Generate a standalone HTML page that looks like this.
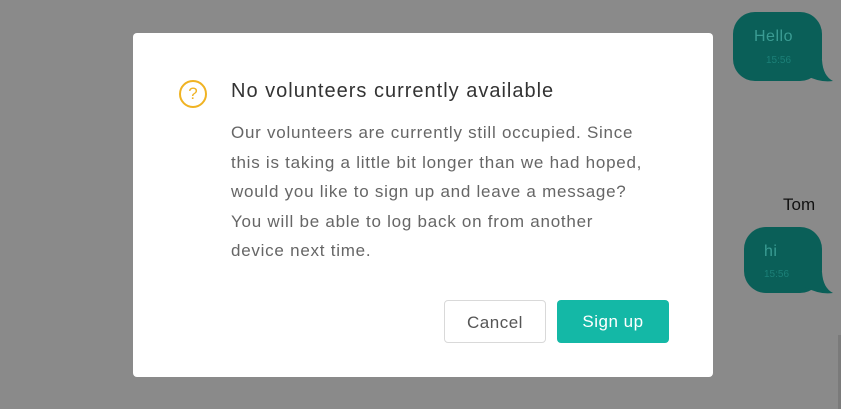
<!DOCTYPE html>
<html><head><style>
body{margin:0;width:841px;height:409px;background:#8a8a8a;position:relative;overflow:hidden;font-family:"Liberation Sans",sans-serif}
.b{position:absolute;background:#0a5f58;border-radius:22px}
.b .t{position:absolute;font-size:16px;color:#3a9c93;letter-spacing:0.5px}
.b .s{position:absolute;font-size:10px;color:#1c8078}
.m{position:absolute;left:133px;top:33px;width:580px;height:344px;background:#fff;border-radius:4px}
.ic{position:absolute;left:179px;top:80px;width:24px;height:24px;border:2px solid #f0b323;border-radius:50%;color:#f0b323;font-size:17px;text-align:center;line-height:24px}
h1{position:absolute;left:231px;top:80px;margin:0;font-weight:normal;font-size:20px;letter-spacing:1px;color:#333}
p{position:absolute;left:231px;top:118px;margin:0;width:420px;font-size:17px;letter-spacing:0.75px;line-height:29.6px;color:#666}
.btn{position:absolute;top:300px;height:43px;border-radius:4px;font-size:17px;letter-spacing:0.5px;text-align:center;line-height:43px;box-sizing:border-box}
</style></head><body>
<div class="b" style="left:733px;top:12px;width:89px;height:69px"><span class="t" style="left:21px;top:16px">Hello</span><span class="s" style="left:33px;top:43px">15:56</span></div>
<svg style="position:absolute;left:805px;top:60px" width="30" height="25"><path d="M0 0 L17 0 Q18 16 28 21 Q15 23 0 15Z" fill="#0a5f58"/></svg>
<div style="position:absolute;left:783px;top:195px;font-size:17px;color:#111">Tom</div>
<div class="b" style="left:744px;top:227px;width:78px;height:66px"><span class="t" style="left:20px;top:16px">hi</span><span class="s" style="left:20px;top:42px">15:56</span></div>
<svg style="position:absolute;left:805px;top:272px" width="30" height="25"><path d="M0 0 L17 0 Q18 16 28 21 Q15 23 0 15Z" fill="#0a5f58"/></svg>
<div style="position:absolute;left:838px;top:335px;width:3px;height:74px;background:#7a7a7a"></div>
<div class="m"></div>
<div class="ic">?</div>
<h1>No volunteers currently available</h1>
<p>Our volunteers are currently still occupied. Since this is taking a little bit longer than we had hoped, would you like to sign up and leave a message? You will be able to log back on from another device next time.</p>
<div class="btn" style="left:444px;width:102px;border:1px solid #d9d9d9;color:#555">Cancel</div>
<div class="btn" style="left:557px;width:112px;background:#14b8a6;color:#fff">Sign up</div>
</body></html>
